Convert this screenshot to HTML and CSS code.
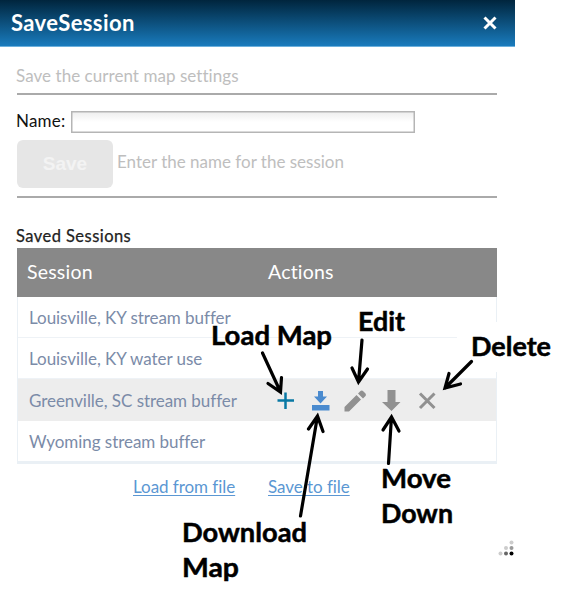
FILE: index.html
```html
<!DOCTYPE html>
<html lang="en">
<head>
<meta charset="utf-8">
<title>SaveSession</title>
<link rel="stylesheet" href="styles.css">
</head>
<body>
<main class="panel">
  <header class="titlebar">
    <h1 class="title">SaveSession</h1>
    <svg class="close" width="16" height="16" viewBox="0 0 16 16"><path d="M2.5 2.5 13.5 13.5M13.5 2.5 2.5 13.5"/></svg>
  </header>
  <div class="content">
    <p class="intro">Save the current map settings</p>
    <hr class="rule">
    <div class="name-row"><label for="name">Name:</label><input id="name" class="name-input" type="text"></div>
    <div class="save-row"><button class="save" disabled>Save</button><span class="hint">Enter the name for the session</span></div>
    <hr class="rule">
    <h2 class="subtitle">Saved Sessions</h2>
    <section class="table">
      <div class="row head"><span class="h-session">Session</span><span class="h-actions">Actions</span></div>
      <div class="row">Louisville, KY stream buffer</div>
      <div class="row">Louisville, KY water use</div>
      <div class="row active"><span class="name">Greenville, SC stream buffer</span>
        <svg class="actions" width="180" height="40" viewBox="270 380 180 40">
          <path class="plus" d="M277.500 400.500H294M285.500 392.500V409"/>
          <path class="download" d="M318 391h5v5.500h4l-6.500 7-6.500-7h4zM312 405h17.500v5.500H312z"/>
          <path class="gray" d="M344.500 411.500v-4.500l12-12 4.500 4.500-12 12zM358 393.500l2.500-2.500q1.500-1 3 .5l2 2q1 1.500 0 2.500l-2.500 2.500z"/>
          <path class="gray" d="M387.500 390h8v12h5l-9 9-9.500-9h5.500z"/>
          <path class="cross" d="M420 393.500 434.500 408M434.500 393.500 420 408"/>
        </svg>
      </div>
      <div class="row last">Wyoming stream buffer</div>
    </section>
    <nav class="links"><a class="load" href="#">Load from file</a><a class="savefile" href="#">Save to file</a></nav>
  </div>
</main>
<svg class="callouts" width="569" height="603" viewBox="0 0 569 603">
  <path class="mask" d="M457 322H569V372H457z"/>
  <g class="arrows">
    <path d="M262.500 353 280.500 392M268 383.500 280.500 392 281.500 377.500"/>
    <path d="M362 340 358.500 382M352 368 358.500 382 367.500 369"/>
    <path d="M471.500 361.500 445 388M449 373.500 445 388 460.500 384"/>
    <path d="M300.500 516 317.500 416M308.500 429 317.500 416 323 431.500"/>
    <path d="M388.500 463.500 391.500 417M383 430 391.500 417 399 431"/>
  </g>
  <g class="labels">
    <text x="211" y="345" textLength="121" lengthAdjust="spacingAndGlyphs">Load Map</text>
    <text x="358" y="331" textLength="47" lengthAdjust="spacingAndGlyphs">Edit</text>
    <text x="471" y="356" textLength="80" lengthAdjust="spacingAndGlyphs">Delete</text>
    <text x="182" y="542" textLength="125" lengthAdjust="spacingAndGlyphs">Download</text>
    <text x="182" y="577" textLength="57" lengthAdjust="spacingAndGlyphs">Map</text>
    <text x="381" y="488" textLength="70" lengthAdjust="spacingAndGlyphs">Move</text>
    <text x="381" y="523" textLength="72" lengthAdjust="spacingAndGlyphs">Down</text>
  </g>
  <g class="grip">
    <circle cx="511.500" cy="542.500" r="2" fill="#ccc"/>
    <circle cx="506" cy="548" r="2" fill="#ccc"/><circle cx="511.500" cy="548" r="2" fill="#999"/>
    <circle cx="500.500" cy="553.500" r="2" fill="#ccc"/><circle cx="506" cy="553.500" r="2" fill="#666"/><circle cx="511.500" cy="553.500" r="2" fill="#000"/>
  </g>
</svg>
</body>
</html>
```

FILE: styles.css
```css
* { box-sizing: border-box; }
body { margin: 0; width: 569px; height: 603px; overflow: hidden; background: #fff; font: 17px/20px Lato, "Liberation Sans", sans-serif; font-variant-ligatures: none; position: relative; }
h1, h2, p { margin: 0; }
.panel { width: 515px; }
.titlebar { height: 47px; padding: 0 17px 0 11px; display: flex; align-items: center; justify-content: space-between; background: linear-gradient(#00253d, #197bbd); border-bottom: 1px solid #6cb0dc; }
.title { color: #fff; font-size: 22px; font-weight: 700; line-height: 46px; letter-spacing: .4px; }
.close { fill: none; stroke: #fff; stroke-width: 3; }
.content { padding: 19px 18px 0 16px; display: flex; flex-direction: column; }
.intro { height: 27px; color: #bebebe; line-height: 19px; letter-spacing: .05px; }
.rule { width: 480px; height: 2px; margin: 0 0 0 1px; border: 0; background: #aaa; }
.name-row { display: flex; height: 38px; padding-top: 16px; color: #111; }
.name-row label { width: 55px; line-height: 19px; letter-spacing: .2px; }
.name-input { width: 344px; height: 22px; border: 1px solid #b5b5b5; background: linear-gradient(#eee, #fff 50%); padding: 0; box-shadow: inset 0 0 0 .5px #b5b5b5; }
.save-row { display: flex; height: 63px; padding: 7px 0 0 1px; color: #bebebe; }
.save { width: 96px; height: 48px; border: 0; border-radius: 6px; background: #e6e6e6; color: #f3f3f3; font: bold 19px "Liberation Sans", sans-serif; padding: 0; margin-right: 4px; }
.hint { line-height: 43px; letter-spacing: 0; }
.subtitle { height: 50px; padding-top: 28px; color: #222; font-size: 16.500px; font-weight: 400; line-height: 20px; letter-spacing: .45px; -webkit-text-stroke: .25px #222; }
.table { width: 480px; height: 216px; margin-left: 1px; border: 1px solid #eaf0f5; border-top: 0; border-bottom-width: 3px; }
.row { height: 41px; display: flex; align-items: center; padding: 1px 0 0 11px; border-bottom: 1px solid #eef2f6; color: #7b8ba8; letter-spacing: -.05px; }
.row.head { height: 49px; margin: 0 -1px; padding: 0 0 2px 10px; background: #888; color: #fff; border: 0; font-size: 19.500px; line-height: 47px; letter-spacing: .2px; }
.h-session { width: 241px; }
.row.active { height: 42px; padding-top: 0; background: #ededed; border: 0; }
.row.last { border: 0; }
.name { width: 241px; flex: none; padding-top: 1px; }
.actions { flex: none; }
.plus { fill: none; stroke: #0878a4; stroke-width: 2.500; }
.download { fill: #4b8bcf; }
.gray { fill: #919191; }
.cross { fill: none; stroke: #919191; stroke-width: 3; }
.links { display: flex; padding: 13px 0 0 117px; letter-spacing: -.05px; }
.links a { color: #5b97d3; text-decoration-thickness: 1px; text-underline-offset: 2px; }
.load { width: 135px; }
.callouts { position: absolute; inset: 0; pointer-events: none; }
.mask { fill: #fff; }
.arrows { fill: none; stroke: #000; stroke-width: 3.200; stroke-linecap: round; stroke-linejoin: miter; }
.labels { font: 700 27.500px Lato, sans-serif; fill: #000; stroke: #000; stroke-width: .5px; }
```
